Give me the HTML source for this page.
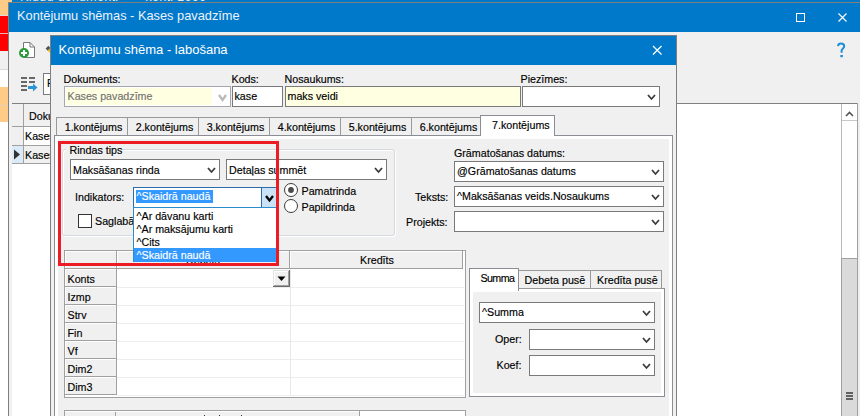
<!DOCTYPE html>
<html><head><meta charset="utf-8"><style>
html,body{margin:0;padding:0;}
body{width:860px;height:416px;overflow:hidden;position:relative;background:#fff;font-family:"Liberation Sans", sans-serif;}
.a{position:absolute;box-sizing:border-box;}
.t{white-space:pre;line-height:1;-webkit-text-stroke:0.15px currentColor;}
svg.a{overflow:visible;}
</style></head><body>
<div class="a" style="left:0px;top:0px;width:12px;height:15px;background:#ffcc87;"></div>
<div class="a" style="left:0px;top:15px;width:8px;height:1px;background:#e8d8d8;"></div>
<div class="a" style="left:0px;top:16px;width:8px;height:35px;background:#ff0000;"></div>
<div class="a" style="left:0px;top:33px;width:8px;height:1px;background:#f0b0b0;"></div>
<div class="a" style="left:0px;top:51px;width:8px;height:18px;background:#f0f0f0;"></div>
<div class="a" style="left:0px;top:69px;width:8px;height:1px;background:#d8d8d8;"></div>
<div class="a" style="left:0px;top:70px;width:8px;height:17px;background:#ffffff;"></div>
<div class="a" style="left:0px;top:87px;width:8px;height:35px;background:#ffcc87;"></div>
<div class="a" style="left:0px;top:105px;width:8px;height:1px;background:#e8d0b8;"></div>
<div class="a" style="left:12px;top:0px;width:848px;height:2px;background:#0179cb;"></div>
<div class="a" style="left:12px;top:0;width:848px;height:2px;overflow:hidden"><div class="a t" style="left:8px;top:-8.6px;font-size:12.8px;color:#dfe9f5;letter-spacing:0.2px;-webkit-text-stroke:0;transform:scaleY(1.12);transform-origin:0 10.8px">Kļūdu dokumenti   -   konti 1000</div></div>
<div class="a" style="left:8px;top:2px;width:852px;height:414px;background:#f0f0f0;"></div>
<div class="a" style="left:8px;top:2px;width:852px;height:1px;background:#7f7f7f;"></div>
<div class="a" style="left:8px;top:2px;width:1px;height:414px;background:#7f7f7f;"></div>
<div class="a" style="left:9px;top:3px;width:851px;height:29px;background:#0179cb;"></div>
<div class="a t" style="left:17px;top:9.86px;font-size:12.8px;color:#eef3fa;transform:scaleY(1.03);transform-origin:0 10.84px;-webkit-text-stroke:0;">Kontējumu shēmas - Kases pavadzīme</div>
<div class="a" style="left:796px;top:13px;width:9px;height:9px;border:1px solid #fff"></div>
<svg class="a" style="left:837px;top:12px" width="11" height="11"><path d="M1.5,1.5 L9.5,9.5 M9.5,1.5 L1.5,9.5" stroke="#fff" stroke-width="1.1"/></svg>
<svg class="a" style="left:0;top:0" width="860" height="416"><path d="M838,46.2 C838.2,44.3 839.5,43.6 841,43.6 C842.8,43.6 844.2,44.6 844.2,46.2 C844.2,48.2 841.8,48.6 841.6,50.6 L841.6,52.8" fill="none" stroke="#1f8ed6" stroke-width="2"/><rect x="840.3" y="55" width="2.6" height="2.2" fill="#1f8ed6"/></svg>
<svg class="a" style="left:17px;top:40px" width="20" height="20">
<path d="M6.5,2.5 H13 L17.5,7 V17.5 H6.5 Z" fill="#fff" stroke="#777" stroke-width="1"/>
<path d="M13,2.5 V7 H17.5" fill="none" stroke="#777" stroke-width="1"/>
<circle cx="7" cy="13" r="5" fill="#2e9b3a"/>
<path d="M7,10 V16 M4,13 H10" stroke="#fff" stroke-width="2"/>
</svg>
<svg class="a" style="left:0;top:0" width="60" height="60"><polygon points="45.6,48.6 48.4,45.8 50.5,47.9 47.7,50.7" fill="#50555a"/><polygon points="47.7,50.7 50.5,47.9 50.5,53" fill="#f5b50a"/></svg>
<svg class="a" style="left:19px;top:75px" width="22" height="18">
<g stroke="#3a3a3a" stroke-width="1.7">
<path d="M2,3 H8 M10,3 H16 M2,7 H8 M10,7 H16 M2,11 H8 M2,15 H8"/>
</g>
<path d="M9,11 H14 V8.5 L18.5,12.5 L14,16.5 V14 H9 Z" fill="#2a94d6"/>
</svg>
<div class="a" style="left:43px;top:73px;width:18px;height:22px;background:#fff;box-shadow:inset 0 0 0 1px #7a7a7a;"></div>
<div class="a t" style="left:47px;top:77.94px;font-size:10.7px;color:#000;transform:scaleY(1.09);transform-origin:0 9.06px;">F</div>
<div class="a" style="left:12px;top:103px;width:846px;height:313px;background:#fff;"></div>
<div class="a" style="left:12px;top:103px;width:846px;height:1px;background:#808080;"></div>
<div class="a" style="left:857px;top:103px;width:1px;height:313px;background:#a0a0a0;"></div>
<div class="a" style="left:12px;top:104px;width:49px;height:23px;background:#f0f0f0;"></div>
<div class="a" style="left:23px;top:104px;width:1px;height:60px;background:#a0a0a0;"></div>
<div class="a" style="left:12px;top:126px;width:49px;height:1px;background:#a0a0a0;"></div>
<div class="a t" style="left:29px;top:110.64px;font-size:10.7px;color:#000;transform:scaleY(1.09);transform-origin:0 9.06px;">Doku</div>
<div class="a t" style="left:25px;top:131.34px;font-size:10.7px;color:#000;transform:scaleY(1.09);transform-origin:0 9.06px;">Kases</div>
<div class="a" style="left:12px;top:127px;width:11px;height:18px;background:#f0f0f0;"></div>
<div class="a" style="left:12px;top:145px;width:49px;height:1px;background:#a0a0a0;"></div>
<div class="a" style="left:12px;top:146px;width:11px;height:17px;background:#d9ebf9;"></div>
<div class="a" style="left:24px;top:146px;width:37px;height:17px;background:#f0f0f0;"></div>
<svg class="a" style="left:13px;top:149px" width="8" height="12"><path d="M1,0.5 L7,5.5 L1,10.5 Z" fill="#333"/></svg>
<div class="a t" style="left:25px;top:149.64px;font-size:10.7px;color:#000;transform:scaleY(1.09);transform-origin:0 9.06px;">Kases</div>
<div class="a" style="left:12px;top:163px;width:49px;height:1px;background:#a0a0a0;"></div>
<div class="a" style="left:841px;top:104px;width:16px;height:312px;background:#fff;"></div>
<div class="a" style="left:841px;top:104px;width:1px;height:312px;background:#b8b8b8;"></div>
<div class="a" style="left:842px;top:120px;width:15px;height:1px;background:#c8c8c8;"></div>
<svg class="a" style="left:845px;top:111px" width="9" height="6"><polyline points="1,5 4.5,1.5 8,5" fill="none" stroke="#555" stroke-width="1.6"/></svg>
<div class="a" style="left:841px;top:258px;width:17px;height:173px;background:#dadada;box-shadow:inset 0 0 0 1px #a0a0a0;"></div>
<div class="a" style="left:846px;top:392px;width:7px;height:2px;background:#606060;"></div>
<div class="a" style="left:846px;top:395px;width:7px;height:2px;background:#606060;"></div>
<div class="a" style="left:846px;top:398px;width:7px;height:2px;background:#606060;"></div>
<div class="a" style="left:50px;top:35px;width:627px;height:396px;background:#f0f0f0;box-shadow:inset 0 0 0 1px #7f7f7f;"></div>
<div class="a" style="left:51px;top:36px;width:625px;height:29px;background:#0179cb;"></div>
<div class="a t" style="left:58.5px;top:42.60px;font-size:13px;color:#fff;transform:scaleY(1.03);transform-origin:0 11.00px;-webkit-text-stroke:0;">Kontējumu shēma - labošana</div>
<svg class="a" style="left:652px;top:45px" width="11" height="11"><path d="M1,1 L9.5,9.5 M9.5,1 L1,9.5" stroke="#fff" stroke-width="1.3"/></svg>
<div class="a t" style="left:63.5px;top:73.74px;font-size:10.7px;color:#000;transform:scaleY(1.09);transform-origin:0 9.06px;">Dokuments:</div>
<div class="a t" style="left:231.5px;top:73.74px;font-size:10.7px;color:#000;transform:scaleY(1.09);transform-origin:0 9.06px;">Kods:</div>
<div class="a t" style="left:284.5px;top:73.74px;font-size:10.7px;color:#000;transform:scaleY(1.09);transform-origin:0 9.06px;">Nosaukums:</div>
<div class="a t" style="left:520.5px;top:73.74px;font-size:10.7px;color:#000;transform:scaleY(1.09);transform-origin:0 9.06px;">Piezīmes:</div>
<div class="a" style="left:64px;top:86px;width:167px;height:21px;background:#fff;box-shadow:inset 0 0 0 1px #a4a8ac;"></div>
<div class="a" style="left:66px;top:88px;width:146px;height:17px;background:#ffffe1;"></div>
<div class="a t" style="left:67.5px;top:90.94px;font-size:10.7px;color:#727272;transform:scaleY(1.09);transform-origin:0 9.06px;">Kases pavadzīme</div>
<svg class="a" style="left:218.2px;top:93.5px" width="9" height="7"><polyline points="1,1 4.5,6 8,1" fill="none" stroke="#b8b8b8" stroke-width="2.2"/></svg>
<div class="a" style="left:232px;top:86px;width:51px;height:21px;background:#fff;box-shadow:inset 0 0 0 1px #7a7a7a;"></div>
<div class="a t" style="left:234.5px;top:91.24px;font-size:10.7px;color:#000;transform:scaleY(1.09);transform-origin:0 9.06px;">kase</div>
<div class="a" style="left:285px;top:86px;width:236px;height:21px;background:#ffffe1;box-shadow:inset 0 0 0 1px #7a7a7a;"></div>
<div class="a t" style="left:287.5px;top:91.24px;font-size:10.7px;color:#000;transform:scaleY(1.09);transform-origin:0 9.06px;">maks veidi</div>
<div class="a" style="left:522px;top:86px;width:138px;height:21px;background:#fff;box-shadow:inset 0 0 0 1px #7a7a7a;"></div>
<svg class="a" style="left:647px;top:94px" width="9" height="6"><polyline points="1,1 4.5,5 8,1" fill="none" stroke="#3c3c3c" stroke-width="1.8"/></svg>
<div class="a" style="left:56px;top:117px;width:72px;height:19px;background:#f0f0f0;box-shadow:inset 0 0 0 1px #999;"></div>
<div class="a t" style="left:64.7px;top:121.64px;font-size:10.7px;color:#000;transform:scaleY(1.09);transform-origin:0 9.06px;">1.kontējums</div>
<div class="a" style="left:127px;top:117px;width:72px;height:19px;background:#f0f0f0;box-shadow:inset 0 0 0 1px #999;"></div>
<div class="a t" style="left:135.7px;top:121.64px;font-size:10.7px;color:#000;transform:scaleY(1.09);transform-origin:0 9.06px;">2.kontējums</div>
<div class="a" style="left:198px;top:117px;width:72px;height:19px;background:#f0f0f0;box-shadow:inset 0 0 0 1px #999;"></div>
<div class="a t" style="left:206.7px;top:121.64px;font-size:10.7px;color:#000;transform:scaleY(1.09);transform-origin:0 9.06px;">3.kontējums</div>
<div class="a" style="left:269px;top:117px;width:72px;height:19px;background:#f0f0f0;box-shadow:inset 0 0 0 1px #999;"></div>
<div class="a t" style="left:277.7px;top:121.64px;font-size:10.7px;color:#000;transform:scaleY(1.09);transform-origin:0 9.06px;">4.kontējums</div>
<div class="a" style="left:340px;top:117px;width:72px;height:19px;background:#f0f0f0;box-shadow:inset 0 0 0 1px #999;"></div>
<div class="a t" style="left:348.7px;top:121.64px;font-size:10.7px;color:#000;transform:scaleY(1.09);transform-origin:0 9.06px;">5.kontējums</div>
<div class="a" style="left:411px;top:117px;width:70px;height:19px;background:#f0f0f0;box-shadow:inset 0 0 0 1px #999;"></div>
<div class="a t" style="left:419.7px;top:121.64px;font-size:10.7px;color:#000;transform:scaleY(1.09);transform-origin:0 9.06px;">6.kontējums</div>
<div class="a" style="left:54px;top:135px;width:619px;height:296px;background:#fff;box-shadow:inset 0 0 0 1px #8a8d94;"></div>
<div class="a" style="left:58px;top:139px;width:611px;height:292px;background:#f0f0f0;"></div>
<div class="a" style="left:480px;top:115px;width:75px;height:21px;background:#fff;box-shadow:inset 0 0 0 1px #8a8d94;"></div>
<div class="a" style="left:481px;top:135px;width:73px;height:4px;background:#fff;"></div>
<div class="a t" style="left:492px;top:119.64px;font-size:10.7px;color:#000;transform:scaleY(1.09);transform-origin:0 9.06px;">7.kontējums</div>
<div class="a" style="left:62px;top:149px;width:333px;height:87px;border:1px solid #d3d9de;border-radius:3px;box-shadow:inset 1px 1px 0 #fff, 1px 1px 0 #fff"></div>
<div class="a" style="left:66px;top:145px;width:56px;height:9px;background:#f0f0f0;"></div>
<div class="a t" style="left:69.5px;top:144.74px;font-size:10.7px;color:#000;transform:scaleY(1.09);transform-origin:0 9.06px;">Rindas tips</div>
<div class="a" style="left:70px;top:159px;width:150px;height:21px;background:#fff;box-shadow:inset 0 0 0 1px #7a7a7a;"></div>
<div class="a t" style="left:73px;top:164.94px;font-size:10.7px;color:#000;transform:scaleY(1.09);transform-origin:0 9.06px;">Maksāšanas rinda</div>
<svg class="a" style="left:207px;top:167px" width="9" height="6"><polyline points="1,1 4.5,5 8,1" fill="none" stroke="#3c3c3c" stroke-width="1.8"/></svg>
<div class="a" style="left:226px;top:159px;width:161px;height:21px;background:#fff;box-shadow:inset 0 0 0 1px #7a7a7a;"></div>
<div class="a t" style="left:229px;top:164.94px;font-size:10.7px;color:#000;transform:scaleY(1.09);transform-origin:0 9.06px;">Detaļas summēt</div>
<svg class="a" style="left:374px;top:167px" width="9" height="6"><polyline points="1,1 4.5,5 8,1" fill="none" stroke="#3c3c3c" stroke-width="1.8"/></svg>
<div class="a t" style="left:75px;top:192.44px;font-size:10.7px;color:#000;transform:scaleY(1.09);transform-origin:0 9.06px;">Indikators:</div>
<svg class="a" style="left:283px;top:182px" width="16" height="32"><circle cx="8" cy="8" r="6.5" fill="#fff" stroke="#3b3b3b"/><circle cx="8" cy="8" r="2.9" fill="#4a4a4a"/><circle cx="8" cy="24" r="6.5" fill="#fff" stroke="#3b3b3b"/></svg>
<div class="a t" style="left:301.5px;top:185.74px;font-size:10.7px;color:#000;transform:scaleY(1.09);transform-origin:0 9.06px;">Pamatrinda</div>
<div class="a t" style="left:301.5px;top:201.74px;font-size:10.7px;color:#000;transform:scaleY(1.09);transform-origin:0 9.06px;">Papildrinda</div>
<div class="a" style="left:78px;top:214px;width:14px;height:14px;background:#fff;box-shadow:inset 0 0 0 1px #333;"></div>
<div class="a t" style="left:95px;top:215.94px;font-size:10.7px;color:#000;transform:scaleY(1.09);transform-origin:0 9.06px;">Saglabā</div>
<div class="a t" style="left:454px;top:148.24px;font-size:10.7px;color:#000;transform:scaleY(1.09);transform-origin:0 9.06px;">Grāmatošanas datums:</div>
<div class="a" style="left:454px;top:161px;width:210px;height:21px;background:#fff;box-shadow:inset 0 0 0 1px #7a7a7a;"></div>
<svg class="a" style="left:651px;top:169px" width="9" height="6"><polyline points="1,1 4.5,5 8,1" fill="none" stroke="#3c3c3c" stroke-width="1.8"/></svg>
<div class="a t" style="left:457px;top:165.74px;font-size:10.7px;color:#000;transform:scaleY(1.09);transform-origin:0 9.06px;">@Grāmatošanas datums</div>
<div class="a t" style="left:415px;top:191.54px;font-size:10.7px;color:#000;transform:scaleY(1.09);transform-origin:0 9.06px;">Teksts:</div>
<div class="a" style="left:454px;top:186px;width:210px;height:21px;background:#fff;box-shadow:inset 0 0 0 1px #7a7a7a;"></div>
<svg class="a" style="left:651px;top:194px" width="9" height="6"><polyline points="1,1 4.5,5 8,1" fill="none" stroke="#3c3c3c" stroke-width="1.8"/></svg>
<div class="a t" style="left:457px;top:190.84px;font-size:10.7px;color:#000;transform:scaleY(1.09);transform-origin:0 9.06px;">^Maksāšanas veids.Nosaukums</div>
<div class="a t" style="left:406px;top:216.94px;font-size:10.7px;color:#000;transform:scaleY(1.09);transform-origin:0 9.06px;">Projekts:</div>
<div class="a" style="left:454px;top:211px;width:210px;height:21px;background:#fff;box-shadow:inset 0 0 0 1px #7a7a7a;"></div>
<svg class="a" style="left:651px;top:219px" width="9" height="6"><polyline points="1,1 4.5,5 8,1" fill="none" stroke="#3c3c3c" stroke-width="1.8"/></svg>
<div class="a" style="left:64px;top:250px;width:402px;height:148px;background:#fff;box-shadow:inset 0 0 0 1px #a0a0a0;"></div>
<div class="a" style="left:65px;top:251px;width:52px;height:18px;background:#f0f0f0;"></div>
<div class="a" style="left:65px;top:251px;width:52px;height:1px;background:#fff;"></div>
<div class="a" style="left:65px;top:251px;width:1px;height:18px;background:#fff;"></div>
<div class="a" style="left:116px;top:251px;width:1px;height:18px;background:#a0a0a0;"></div>
<div class="a" style="left:65px;top:268px;width:52px;height:1px;background:#a0a0a0;"></div>
<div class="a" style="left:117px;top:251px;width:173px;height:18px;background:#f0f0f0;"></div>
<div class="a" style="left:117px;top:251px;width:173px;height:1px;background:#fff;"></div>
<div class="a" style="left:117px;top:251px;width:1px;height:18px;background:#fff;"></div>
<div class="a" style="left:289px;top:251px;width:1px;height:18px;background:#a0a0a0;"></div>
<div class="a" style="left:117px;top:268px;width:173px;height:1px;background:#a0a0a0;"></div>
<div class="a" style="left:290px;top:251px;width:173px;height:18px;background:#f0f0f0;"></div>
<div class="a" style="left:290px;top:251px;width:173px;height:1px;background:#fff;"></div>
<div class="a" style="left:290px;top:251px;width:1px;height:18px;background:#fff;"></div>
<div class="a" style="left:462px;top:251px;width:1px;height:18px;background:#a0a0a0;"></div>
<div class="a" style="left:290px;top:268px;width:173px;height:1px;background:#a0a0a0;"></div>
<div class="a t" style="left:360px;top:254.94px;font-size:10.7px;color:#000;transform:scaleY(1.09);transform-origin:0 9.06px;">Kredīts</div>
<div class="a t" style="left:186px;top:255.44px;font-size:10.7px;color:#000;transform:scaleY(1.09);transform-origin:0 9.06px;">Debets</div>
<div class="a" style="left:65px;top:269px;width:52px;height:18px;background:#f0f0f0;"></div>
<div class="a" style="left:65px;top:269px;width:52px;height:1px;background:#fff;"></div>
<div class="a" style="left:65px;top:269px;width:1px;height:18px;background:#fff;"></div>
<div class="a" style="left:116px;top:269px;width:1px;height:18px;background:#a0a0a0;"></div>
<div class="a" style="left:65px;top:286px;width:52px;height:1px;background:#a0a0a0;"></div>
<div class="a t" style="left:67.5px;top:273.54px;font-size:10.7px;color:#000;transform:scaleY(1.09);transform-origin:0 9.06px;">Konts</div>
<div class="a" style="left:117px;top:287px;width:347px;height:1px;background:#ededed;"></div>
<div class="a" style="left:65px;top:287px;width:52px;height:18px;background:#f0f0f0;"></div>
<div class="a" style="left:65px;top:287px;width:52px;height:1px;background:#fff;"></div>
<div class="a" style="left:65px;top:287px;width:1px;height:18px;background:#fff;"></div>
<div class="a" style="left:116px;top:287px;width:1px;height:18px;background:#a0a0a0;"></div>
<div class="a" style="left:65px;top:304px;width:52px;height:1px;background:#a0a0a0;"></div>
<div class="a t" style="left:67.5px;top:291.54px;font-size:10.7px;color:#000;transform:scaleY(1.09);transform-origin:0 9.06px;">Izmp</div>
<div class="a" style="left:117px;top:305px;width:347px;height:1px;background:#ededed;"></div>
<div class="a" style="left:65px;top:305px;width:52px;height:18px;background:#f0f0f0;"></div>
<div class="a" style="left:65px;top:305px;width:52px;height:1px;background:#fff;"></div>
<div class="a" style="left:65px;top:305px;width:1px;height:18px;background:#fff;"></div>
<div class="a" style="left:116px;top:305px;width:1px;height:18px;background:#a0a0a0;"></div>
<div class="a" style="left:65px;top:322px;width:52px;height:1px;background:#a0a0a0;"></div>
<div class="a t" style="left:67.5px;top:309.54px;font-size:10.7px;color:#000;transform:scaleY(1.09);transform-origin:0 9.06px;">Strv</div>
<div class="a" style="left:117px;top:323px;width:347px;height:1px;background:#ededed;"></div>
<div class="a" style="left:65px;top:323px;width:52px;height:18px;background:#f0f0f0;"></div>
<div class="a" style="left:65px;top:323px;width:52px;height:1px;background:#fff;"></div>
<div class="a" style="left:65px;top:323px;width:1px;height:18px;background:#fff;"></div>
<div class="a" style="left:116px;top:323px;width:1px;height:18px;background:#a0a0a0;"></div>
<div class="a" style="left:65px;top:340px;width:52px;height:1px;background:#a0a0a0;"></div>
<div class="a t" style="left:67.5px;top:327.54px;font-size:10.7px;color:#000;transform:scaleY(1.09);transform-origin:0 9.06px;">Fin</div>
<div class="a" style="left:117px;top:341px;width:347px;height:1px;background:#ededed;"></div>
<div class="a" style="left:65px;top:341px;width:52px;height:18px;background:#f0f0f0;"></div>
<div class="a" style="left:65px;top:341px;width:52px;height:1px;background:#fff;"></div>
<div class="a" style="left:65px;top:341px;width:1px;height:18px;background:#fff;"></div>
<div class="a" style="left:116px;top:341px;width:1px;height:18px;background:#a0a0a0;"></div>
<div class="a" style="left:65px;top:358px;width:52px;height:1px;background:#a0a0a0;"></div>
<div class="a t" style="left:67.5px;top:345.54px;font-size:10.7px;color:#000;transform:scaleY(1.09);transform-origin:0 9.06px;">Vf</div>
<div class="a" style="left:117px;top:359px;width:347px;height:1px;background:#ededed;"></div>
<div class="a" style="left:65px;top:359px;width:52px;height:18px;background:#f0f0f0;"></div>
<div class="a" style="left:65px;top:359px;width:52px;height:1px;background:#fff;"></div>
<div class="a" style="left:65px;top:359px;width:1px;height:18px;background:#fff;"></div>
<div class="a" style="left:116px;top:359px;width:1px;height:18px;background:#a0a0a0;"></div>
<div class="a" style="left:65px;top:376px;width:52px;height:1px;background:#a0a0a0;"></div>
<div class="a t" style="left:67.5px;top:363.54px;font-size:10.7px;color:#000;transform:scaleY(1.09);transform-origin:0 9.06px;">Dim2</div>
<div class="a" style="left:117px;top:377px;width:347px;height:1px;background:#ededed;"></div>
<div class="a" style="left:65px;top:377px;width:52px;height:18px;background:#f0f0f0;"></div>
<div class="a" style="left:65px;top:377px;width:52px;height:1px;background:#fff;"></div>
<div class="a" style="left:65px;top:377px;width:1px;height:18px;background:#fff;"></div>
<div class="a" style="left:116px;top:377px;width:1px;height:18px;background:#a0a0a0;"></div>
<div class="a" style="left:65px;top:394px;width:52px;height:1px;background:#a0a0a0;"></div>
<div class="a t" style="left:67.5px;top:381.54px;font-size:10.7px;color:#000;transform:scaleY(1.09);transform-origin:0 9.06px;">Dim3</div>
<div class="a" style="left:117px;top:395px;width:347px;height:1px;background:#ededed;"></div>
<div class="a" style="left:290px;top:269px;width:1px;height:126px;background:#e8e8e8;"></div>
<div class="a" style="left:273px;top:270px;width:17px;height:17px;background:#f0f0f0;"></div>
<div class="a" style="left:273px;top:270px;width:17px;height:1px;background:#e3e3e3;"></div>
<div class="a" style="left:273px;top:270px;width:1px;height:17px;background:#e3e3e3;"></div>
<div class="a" style="left:274px;top:271px;width:15px;height:1px;background:#fff;"></div>
<div class="a" style="left:274px;top:271px;width:1px;height:15px;background:#fff;"></div>
<div class="a" style="left:288px;top:271px;width:1px;height:15px;background:#a0a0a0;"></div>
<div class="a" style="left:274px;top:285px;width:15px;height:1px;background:#a0a0a0;"></div>
<div class="a" style="left:289px;top:270px;width:1px;height:17px;background:#696969;"></div>
<div class="a" style="left:273px;top:286px;width:17px;height:1px;background:#696969;"></div>
<svg class="a" style="left:277px;top:276px" width="9" height="6"><path d="M0.5,0.5 H8.5 L4.5,5 Z" fill="#000"/></svg>
<div class="a" style="left:64px;top:410px;width:402px;height:21px;background:#fff;box-shadow:inset 0 0 0 1px #a0a0a0;"></div>
<div class="a" style="left:65px;top:411px;width:294px;height:5px;background:#f0f0f0;"></div>
<div class="a" style="left:65px;top:411px;width:294px;height:1px;background:#fff;"></div>
<div class="a" style="left:359px;top:411px;width:1px;height:5px;background:#a0a0a0;"></div>
<div class="a" style="left:115px;top:412px;width:1px;height:4px;background:#a0a0a0;"></div>
<div class="a" style="left:204px;top:415px;width:1px;height:1px;background:#333;"></div>
<div class="a" style="left:219px;top:415px;width:1px;height:1px;background:#333;"></div>
<div class="a" style="left:241px;top:415px;width:1px;height:1px;background:#333;"></div>
<div class="a" style="left:469px;top:288px;width:196px;height:109px;background:#fff;box-shadow:inset 0 0 0 1px #8a8d94;"></div>
<div class="a" style="left:473px;top:292px;width:188px;height:101px;background:#f0f0f0;"></div>
<div class="a" style="left:518px;top:270px;width:73px;height:19px;background:#f0f0f0;box-shadow:inset 0 0 0 1px #999;"></div>
<div class="a t" style="left:524.5px;top:274.94px;font-size:10.7px;color:#000;transform:scaleY(1.09);transform-origin:0 9.06px;">Debeta pusē</div>
<div class="a" style="left:590px;top:270px;width:72px;height:19px;background:#f0f0f0;box-shadow:inset 0 0 0 1px #999;"></div>
<div class="a t" style="left:597px;top:274.94px;font-size:10.7px;color:#000;transform:scaleY(1.09);transform-origin:0 9.06px;">Kredīta pusē</div>
<div class="a" style="left:469px;top:268px;width:50px;height:23px;background:#fff;box-shadow:inset 0 0 0 1px #8a8d94;"></div>
<div class="a" style="left:470px;top:288px;width:48px;height:4px;background:#fff;"></div>
<div class="a t" style="left:480.5px;top:272.64px;font-size:10.7px;color:#000;transform:scaleY(1.09);transform-origin:0 9.06px;letter-spacing:-0.6px;">Summa</div>
<div class="a" style="left:479px;top:302px;width:176px;height:21px;background:#fff;box-shadow:inset 0 0 0 1px #7a7a7a;"></div>
<svg class="a" style="left:642px;top:310px" width="9" height="6"><polyline points="1,1 4.5,5 8,1" fill="none" stroke="#3c3c3c" stroke-width="1.8"/></svg>
<div class="a t" style="left:482px;top:307.24px;font-size:10.7px;color:#000;transform:scaleY(1.09);transform-origin:0 9.06px;">^Summa</div>
<div class="a t" style="left:495px;top:333.94px;font-size:10.7px;color:#000;transform:scaleY(1.09);transform-origin:0 9.06px;">Oper:</div>
<div class="a" style="left:529px;top:329px;width:126px;height:21px;background:#fff;box-shadow:inset 0 0 0 1px #7a7a7a;"></div>
<svg class="a" style="left:642px;top:337px" width="9" height="6"><polyline points="1,1 4.5,5 8,1" fill="none" stroke="#3c3c3c" stroke-width="1.8"/></svg>
<div class="a t" style="left:496.5px;top:359.94px;font-size:10.7px;color:#000;transform:scaleY(1.09);transform-origin:0 9.06px;">Koef:</div>
<div class="a" style="left:529px;top:355px;width:126px;height:21px;background:#fff;box-shadow:inset 0 0 0 1px #7a7a7a;"></div>
<svg class="a" style="left:642px;top:363px" width="9" height="6"><polyline points="1,1 4.5,5 8,1" fill="none" stroke="#3c3c3c" stroke-width="1.8"/></svg>
<div class="a" style="left:133px;top:187px;width:145px;height:21px;background:#fff;box-shadow:inset 0 0 0 1px #2c6cab;"></div>
<div class="a" style="left:261px;top:188px;width:16px;height:19px;background:#c9e2f6;"></div>
<div class="a" style="left:261px;top:188px;width:1px;height:19px;background:#2c6cab;"></div>
<svg class="a" style="left:265px;top:194.5px" width="9" height="6.5"><polyline points="1,1 4.5,5.5 8,1" fill="none" stroke="#000" stroke-width="2.3"/></svg>
<div class="a" style="left:136px;top:190px;width:77px;height:13px;background:#3399ff;"></div>
<div class="a t" style="left:136.5px;top:190.94px;font-size:10.7px;color:#fff;transform:scaleY(1.09);transform-origin:0 9.06px;">^Skaidrā naudā</div>
<div class="a" style="left:133px;top:207px;width:145px;height:55px;background:#fff;box-shadow:inset 0 0 0 1px #2a8ccc;"></div>
<div class="a t" style="left:136.5px;top:211.04px;font-size:10.7px;color:#000;transform:scaleY(1.09);transform-origin:0 9.06px;">^Ar dāvanu karti</div>
<div class="a t" style="left:136.5px;top:223.84px;font-size:10.7px;color:#000;transform:scaleY(1.09);transform-origin:0 9.06px;">^Ar maksājumu karti</div>
<div class="a t" style="left:136.5px;top:236.64px;font-size:10.7px;color:#000;transform:scaleY(1.09);transform-origin:0 9.06px;">^Cits</div>
<div class="a" style="left:134px;top:248px;width:144px;height:14px;background:#3399ff;"></div>
<div class="a t" style="left:136.5px;top:249.94px;font-size:10.7px;color:#fff;transform:scaleY(1.09);transform-origin:0 9.06px;">^Skaidrā naudā</div>
<div class="a" style="left:58px;top:141px;width:221px;height:125px;border:3px solid #ed1c24"></div>
</body></html>
